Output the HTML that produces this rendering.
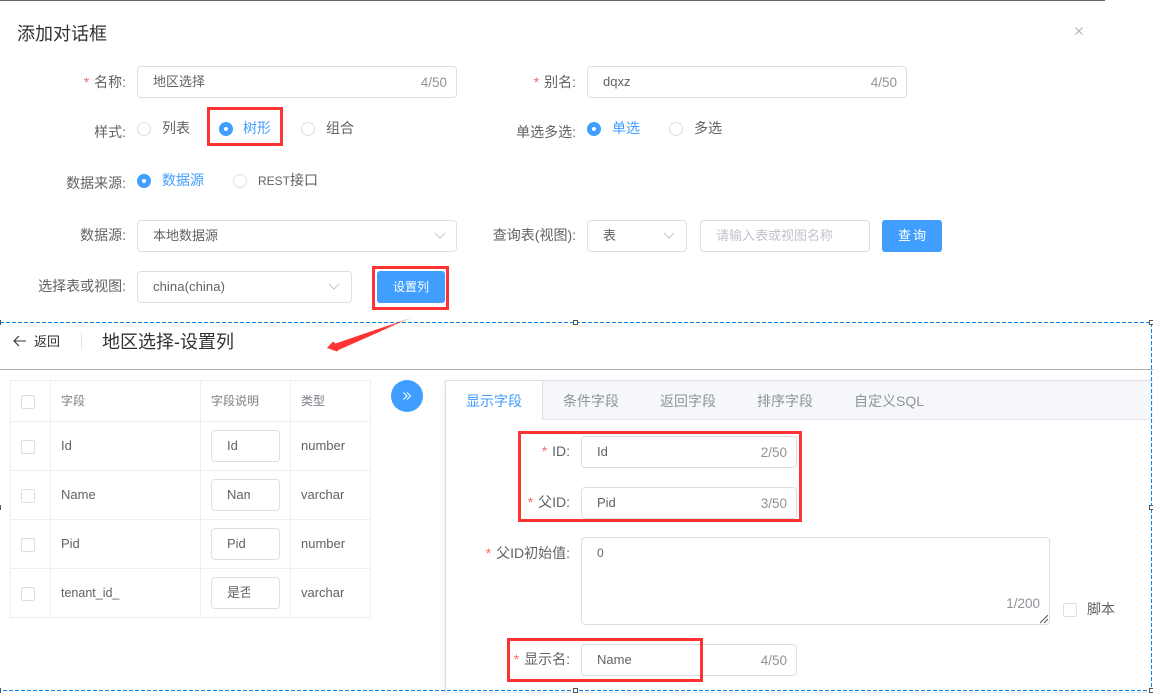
<!DOCTYPE html>
<html><head><meta charset="utf-8"><style>
html,body{margin:0;padding:0;background:#fff}
body{position:relative;width:1153px;height:692px;overflow:hidden;font-family:"Liberation Sans","Noto Sans CJK SC",sans-serif;font-size:13px;color:#606266}
div{position:absolute;box-sizing:border-box}
.t{white-space:nowrap;line-height:20px;height:20px}
.l{font-size:14px}
.r{text-align:right}
.b{border:1px solid #dcdfe6;border-radius:4px;background:#fff}
.s{color:#f56c6c;margin-right:1px}
.c{font-size:13.5px;color:#909399;text-align:right;width:50px}
.rd{width:14px;height:14px;border:1px solid #dcdfe6;border-radius:50%;background:#fff}
.on{border:0;background:#409eff}
.on:after{content:"";position:absolute;left:5px;top:5px;width:4px;height:4px;background:#fff;border-radius:50%}
.bl{color:#409eff}
.btn{background:#409eff;color:#fff;border-radius:3px;text-align:center;line-height:32px;font-size:12px}
.red{border:3px solid #f33;z-index:5}
.ck{width:14px;height:14px;border:1px solid #dcdfe6;border-radius:2px;background:#fff}
.h{background:#ebeef5}
.hd{width:5px;height:5px;border:1px solid #555;background:#fff;z-index:6}
svg{position:absolute}
.th{font-size:12px;color:#909399;font-weight:500}
</style></head><body>
<div style="left:0;top:0;width:1105px;height:1px;background:#666"></div>
<div class="t" style="left:17px;top:24px;font-size:18px;color:#303133">添加对话框</div>
<svg style="left:1075px;top:27px" width="8" height="8"><path d="M.5.5l7 7M7.500.5l-7 7" stroke="#b5a9b5" fill="none"/></svg>

<div class="t r l" style="left:40px;width:86px;top:72px"><span class="s">*</span> 名称:</div>
<div class="b" style="left:137px;top:66px;width:320px;height:32px"></div>
<div class="t" style="left:153px;top:72px">地区选择</div>
<div class="t c" style="left:397px;top:73px">4/50</div>
<div class="t r l" style="left:490px;width:86px;top:72px"><span class="s">*</span> 别名:</div>
<div class="b" style="left:587px;top:66px;width:320px;height:32px"></div>
<div class="t" style="left:603px;top:72px">dqxz</div>
<div class="t c" style="left:847px;top:73px">4/50</div>

<div class="t r l" style="left:40px;width:86px;top:122px">样式:</div>
<div class="rd" style="left:137px;top:122px"></div><div class="t l" style="left:162px;top:118px">列表</div>
<div class="rd on" style="left:219px;top:122px"></div><div class="t bl l" style="left:243px;top:118px">树形</div>
<div class="rd" style="left:301px;top:122px"></div><div class="t l" style="left:326px;top:118px">组合</div>
<div class="red" style="left:207px;top:107px;width:76px;height:39px"></div>
<div class="t r l" style="left:490px;width:86px;top:122px">单选多选:</div>
<div class="rd on" style="left:587px;top:122px"></div><div class="t bl l" style="left:612px;top:118px">单选</div>
<div class="rd" style="left:669px;top:122px"></div><div class="t l" style="left:694px;top:118px">多选</div>

<div class="t r l" style="left:40px;width:86px;top:173px">数据来源:</div>
<div class="rd on" style="left:137px;top:174px"></div><div class="t bl l" style="left:162px;top:170px">数据源</div>
<div class="rd" style="left:233px;top:174px"></div><div class="t l" style="left:258px;top:170px"><span style="font-size:12px">REST</span>接口</div>

<div class="t r l" style="left:40px;width:86px;top:225px">数据源:</div>
<div class="b" style="left:137px;top:220px;width:320px;height:32px"></div>
<div class="t" style="left:153px;top:226px">本地数据源</div>
<svg style="left:434px;top:232px" width="12" height="8"><path d="M1 1l5 5 5-5" stroke="#c0c4cc" fill="none"/></svg>
<div class="t r l" style="left:470px;width:106px;top:225px">查询表(视图):</div>
<div class="b" style="left:587px;top:220px;width:100px;height:32px"></div>
<div class="t" style="left:603px;top:226px">表</div>
<svg style="left:663px;top:232px" width="12" height="8"><path d="M1 1l5 5 5-5" stroke="#c0c4cc" fill="none"/></svg>
<div class="b" style="left:700px;top:220px;width:170px;height:32px"></div>
<div class="t" style="left:716px;top:226px;color:#c0c4cc">请输入表或视图名称</div>
<div class="btn" style="left:882px;top:220px;width:60px;height:32px;letter-spacing:2px;font-size:13px;text-indent:2px">查询</div>

<div class="t r l" style="left:20px;width:106px;top:276px">选择表或视图:</div>
<div class="b" style="left:137px;top:271px;width:215px;height:32px"></div>
<div class="t" style="left:153px;top:277px;letter-spacing:.1px">china(china)</div>
<svg style="left:328px;top:283px" width="12" height="8"><path d="M1 1l5 5 5-5" stroke="#c0c4cc" fill="none"/></svg>
<div class="btn" style="left:377px;top:271px;width:68px;height:32px">设置列</div>
<div class="red" style="left:372px;top:266px;width:77px;height:44px"></div>

<svg style="left:0;top:0;z-index:4" width="1153" height="692">
<defs><linearGradient id="g" x1="413" y1="317" x2="385" y2="329" gradientUnits="userSpaceOnUse"><stop offset="0" stop-color="#f33" stop-opacity=".25"/><stop offset="1" stop-color="#f33"/></linearGradient></defs>
<path d="M0 322.500H1151.500V690.500H0" fill="none" stroke="#0a84e8" stroke-dasharray="4 2"/>
<path d="M413 317L338.500 350 337 351.500 327 348 333 341.500 335.500 343.500Z" fill="url(#g)"/>
</svg>
<div class="hd" style="left:573px;top:320px"></div>
<div class="hd" style="left:573px;top:688px"></div>
<div class="hd" style="left:-4px;top:505px"></div>
<div class="hd" style="left:1149px;top:505px"></div>
<div class="hd" style="left:-4px;top:320px"></div>
<div class="hd" style="left:1149px;top:320px"></div>
<div class="hd" style="left:-4px;top:688px"></div>
<div class="hd" style="left:1149px;top:688px"></div>

<svg style="left:12px;top:334px" width="16" height="14"><path d="M14 7H2M7 2L2 7l5 5" stroke="#303133" fill="none" stroke-width="1.100"/></svg>
<div class="t" style="left:34px;top:332px;color:#303133">返回</div>
<div style="left:81px;top:333px;width:1px;height:16px;background:#dcdfe6"></div>
<div class="t" style="left:102px;top:332px;font-size:18px;color:#303133">地区选择-设置列</div>
<div style="left:0;top:369px;width:1153px;height:1px;background:#aaa"></div>

<div class="h" style="left:10px;top:380px;width:361px;height:1px"></div>
<div class="h" style="left:10px;top:421px;width:361px;height:1px"></div>
<div class="h" style="left:10px;top:470px;width:361px;height:1px"></div>
<div class="h" style="left:10px;top:519px;width:361px;height:1px"></div>
<div class="h" style="left:10px;top:568px;width:361px;height:1px"></div>
<div class="h" style="left:10px;top:617px;width:361px;height:1px"></div>
<div class="h" style="left:10px;top:380px;width:1px;height:238px"></div>
<div class="h" style="left:50px;top:380px;width:1px;height:238px"></div>
<div class="h" style="left:200px;top:380px;width:1px;height:238px"></div>
<div class="h" style="left:290px;top:380px;width:1px;height:238px"></div>
<div class="h" style="left:370px;top:380px;width:1px;height:238px"></div>

<div class="ck" style="left:21px;top:395px"></div>
<div class="ck" style="left:21px;top:440px"></div>
<div class="ck" style="left:21px;top:489px"></div>
<div class="ck" style="left:21px;top:538px"></div>
<div class="ck" style="left:21px;top:587px"></div>

<div class="t th" style="left:61px;top:391px">字段</div>
<div class="t th" style="left:211px;top:391px">字段说明</div>
<div class="t th" style="left:301px;top:391px">类型</div>

<div class="t" style="left:61px;top:436px">Id</div>
<div class="t" style="left:61px;top:485px">Name</div>
<div class="t" style="left:61px;top:534px">Pid</div>
<div class="t" style="left:61px;top:583px;font-size:12.500px">tenant_id_</div>
<div class="t" style="left:301px;top:436px">number</div>
<div class="t" style="left:301px;top:485px">varchar</div>
<div class="t" style="left:301px;top:534px">number</div>
<div class="t" style="left:301px;top:583px">varchar</div>

<div class="b" style="left:211px;top:430px;width:69px;height:32px"></div>
<div class="b" style="left:211px;top:479px;width:69px;height:32px"></div>
<div class="b" style="left:211px;top:528px;width:69px;height:32px"></div>
<div class="b" style="left:211px;top:577px;width:69px;height:32px"></div>
<div class="t" style="left:227px;top:436px">Id</div>
<div class="t" style="left:227px;top:485px;width:23px;overflow:hidden">Name</div>
<div class="t" style="left:227px;top:534px">Pid</div>
<div class="t" style="left:227px;top:583px;width:23px;overflow:hidden">是否</div>

<div style="left:391px;top:380px;width:32px;height:32px;border-radius:50%;background:#409eff"></div>
<svg style="left:402px;top:391px" width="10" height="10"><path d="M1.500 1.500L5 5 1.500 8.500M5 1.500L8.500 5 5 8.500" stroke="#fff" fill="none"/></svg>

<div style="left:445px;top:380px;width:708px;height:312px;border:1px solid #dcdfe6;border-right:0;border-bottom:0;box-shadow:0 2px 4px rgba(0,0,0,.12);background:#fff"></div>
<div style="left:446px;top:381px;width:707px;height:39px;background:#f5f7fa;border-bottom:1px solid #e4e7ed"></div>
<div style="left:446px;top:381px;width:97px;height:39px;background:#fff;border-right:1px solid #dcdfe6"></div>
<div class="t bl l" style="left:466px;top:391px">显示字段</div>
<div class="t l" style="left:563px;top:391px;color:#909399">条件字段</div>
<div class="t l" style="left:660px;top:391px;color:#909399">返回字段</div>
<div class="t l" style="left:757px;top:391px;color:#909399">排序字段</div>
<div class="t l" style="left:854px;top:391px;color:#909399">自定义SQL</div>

<div class="t r l" style="left:470px;width:100px;top:441px"><span class="s">*</span> ID:</div>
<div class="b" style="left:581px;top:436px;width:216px;height:32px"></div>
<div class="t" style="left:597px;top:442px">Id</div>
<div class="t c" style="left:737px;top:443px">2/50</div>
<div class="t r l" style="left:470px;width:100px;top:492px"><span class="s">*</span> 父ID:</div>
<div class="b" style="left:581px;top:487px;width:216px;height:32px"></div>
<div class="t" style="left:597px;top:493px">Pid</div>
<div class="t c" style="left:737px;top:494px">3/50</div>
<div class="red" style="left:518px;top:431px;width:284px;height:91px"></div>

<div class="t r l" style="left:470px;width:100px;top:543px"><span class="s">*</span> 父ID初始值:</div>
<div class="b" style="left:581px;top:537px;width:469px;height:88px"></div>
<div class="t" style="left:597px;top:543px;font-size:12px">0</div>
<div class="t c" style="left:990px;top:594px">1/200</div>
<svg style="left:1039px;top:614px" width="10" height="10"><path d="M1 9L9 1M5 9L9 5" stroke="#555" fill="none"/></svg>
<div class="ck" style="left:1063px;top:603px"></div>
<div class="t l" style="left:1087px;top:599px">脚本</div>

<div class="t r l" style="left:470px;width:100px;top:649px"><span class="s">*</span> 显示名:</div>
<div class="b" style="left:581px;top:644px;width:216px;height:32px"></div>
<div class="t" style="left:597px;top:650px">Name</div>
<div class="t c" style="left:737px;top:651px">4/50</div>
<div class="red" style="left:507px;top:638px;width:196px;height:44px"></div>
</body></html>
